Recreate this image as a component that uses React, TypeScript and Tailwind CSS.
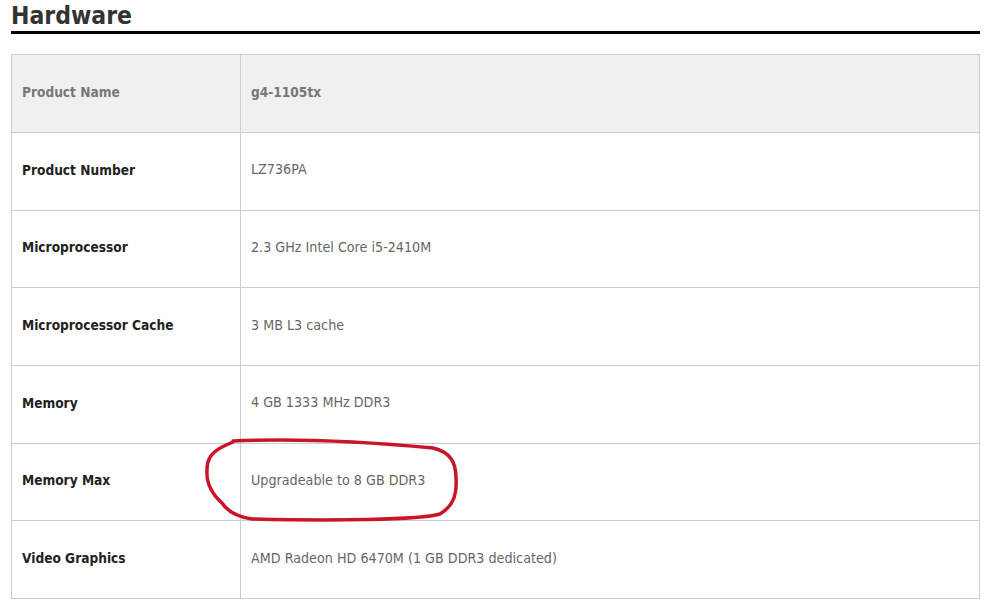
const rows: { label: string; value: string }[] = [
  { label: "Product Number", value: "LZ736PA" },
  { label: "Microprocessor", value: "2.3 GHz Intel Core i5-2410M" },
  { label: "Microprocessor Cache", value: "3 MB L3 cache" },
  { label: "Memory", value: "4 GB 1333 MHz DDR3" },
  { label: "Memory Max", value: "Upgradeable to 8 GB DDR3" },
  { label: "Video Graphics", value: "AMD Radeon HD 6470M (1 GB DDR3 dedicated)" },
];

const font = { fontFamily: '"DejaVu Sans Condensed", "Liberation Sans", sans-serif' };

const App = () => {
  return (
    <div className="relative w-[988px] h-[601px] overflow-hidden bg-white" style={font}>
      <div className="pl-[11px] pr-[8px]">
        <h1 className="pt-[2px] h-[31px] text-[24.5px] leading-[28px] font-bold text-[#333]">Hardware</h1>
        <div className="h-[3px] bg-black"></div>

        {/* spec table */}
        <div className="mt-[20px] border border-[#cccccc]">
          <div className="flex h-[77px] bg-[#f0f0f0]">
            <div className="w-[229px] border-r border-[#cccccc] flex items-center pl-[10px] pb-[3px] text-[13.6px] font-bold text-[#777]">
              Product Name
            </div>
            <div className="flex-1 flex items-center pl-[10px] pb-[3px] text-[13.6px] font-bold text-[#777]">g4-1105tx</div>
          </div>
          {rows.map((r) => (
            <div key={r.label} className="flex h-[77.7px] border-t border-[#cccccc]">
              <div className="w-[229px] border-r border-[#cccccc] flex items-center pl-[10px] pb-[3px] text-[13.6px] font-bold text-[#222]">
                {r.label}
              </div>
              <div className="flex-1 flex items-center pl-[10px] pb-[3px] text-[14.2px] text-[#666]">{r.value}</div>
            </div>
          ))}
        </div>
      </div>

      {/* red hand-drawn marker */}
      <svg className="absolute inset-0 pointer-events-none" width="988" height="601" viewBox="0 0 988 601">
        <path
          d="M233 441 C 300 438, 380 443, 433 448 C 450 452, 456 462, 456 478 C 457 492, 455 505, 440 514 C 420 520, 330 521, 252 519 C 238 517, 228 512, 222 503 C 212 494, 206 484, 207 470 C 207 458, 212 452, 224 446 L 233 442"
          fill="none"
          stroke="#c8152a"
          strokeWidth="3.5"
          strokeLinecap="round"
        />
      </svg>
    </div>
  );
};

export default App;
